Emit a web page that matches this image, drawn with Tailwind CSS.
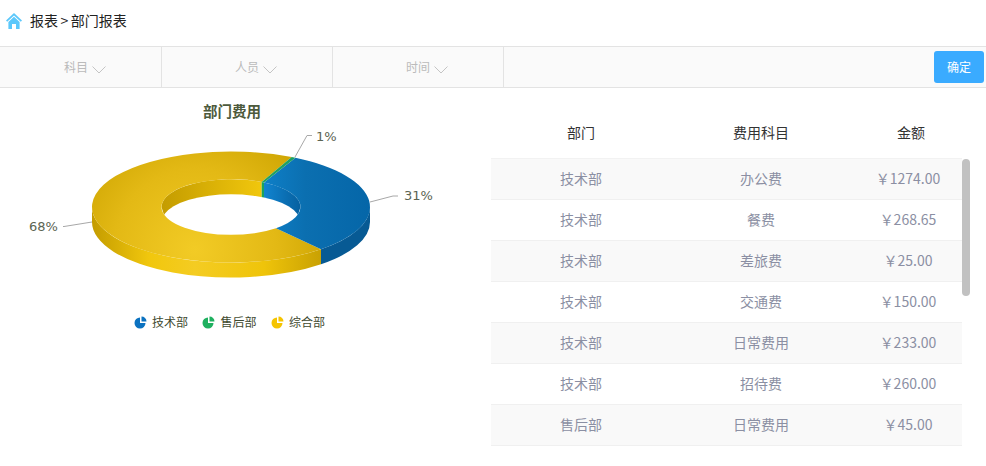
<!DOCTYPE html>
<html lang="en">
<head>
  <meta charset="UTF-8" />
  <title>部门报表</title>
  <script src="https://cdn.jsdelivr.net/npm/@tailwindcss/browser@4"></script>
</head>
<body class="h-[466px] overflow-hidden bg-white font-['Noto_Sans_CJK_SC',sans-serif] text-[#333]">
  <!-- breadcrumb -->
  <div class="flex h-[46px] items-center pb-[4px] pl-[6px] text-[14px] text-[#222]">
    <svg class="mr-[8px] h-[16px] w-[16px]" viewBox="0 0 16 16">
      <path d="M8 0 L16 7.6 L14.8 8.8 L8 2.4 L1.2 8.8 L0 7.6 Z" fill="#5cc8fb" />
      <path d="M8 3.8 L13.6 9 V16 H10 V11 H6 V16 H2.4 V9 Z" fill="#5cc8fb" />
    </svg>
    <span class="relative -top-[1px]">报表<span class="px-[2.5px]">&gt;</span>部门报表</span>
  </div>

  <!-- filter bar -->
  <div class="flex h-[42px] items-center justify-between overflow-hidden border-y border-[#e3e3e3] bg-[#fafafa] pr-[2px]">
    <div class="-ml-[9px] flex h-full text-[12px] text-[#bbb]">
      <div class="flex w-[171px] items-center justify-center border-r border-[#e3e3e3]">
        <span class="relative">科目
          <svg class="absolute top-[8px] left-full ml-[4px] h-[8px] w-[14px]" viewBox="0 0 14 8"><path d="M0.5 0.5 L7 7 L13.5 0.5" fill="none" stroke="#c4c4c4" /></svg>
        </span>
      </div>
      <div class="flex w-[171px] items-center justify-center border-r border-[#e3e3e3]">
        <span class="relative">人员
          <svg class="absolute top-[8px] left-full ml-[4px] h-[8px] w-[14px]" viewBox="0 0 14 8"><path d="M0.5 0.5 L7 7 L13.5 0.5" fill="none" stroke="#c4c4c4" /></svg>
        </span>
      </div>
      <div class="flex w-[171px] items-center justify-center border-r border-[#e3e3e3]">
        <span class="relative">时间
          <svg class="absolute top-[8px] left-full ml-[4px] h-[8px] w-[14px]" viewBox="0 0 14 8"><path d="M0.5 0.5 L7 7 L13.5 0.5" fill="none" stroke="#c4c4c4" /></svg>
        </span>
      </div>
    </div>
    <button class="h-[32px] w-[50px] rounded-[3px] bg-[#3aabff] text-[12px] text-white">确定</button>
  </div>

  <div class="flex">
    <!-- chart -->
    <div class="w-[491px] shrink-0">
      <div class="w-[464px] pt-[14px] text-center text-[14.5px] leading-[20px] font-bold text-[#4d5a3c]"><span class="relative -top-[1px]">部门费用</span></div>
      <svg class="block h-[170px] w-[491px]" viewBox="0 122 491 170">
        <defs>
          <radialGradient id="yellowTop" cx="195" cy="250" r="135" gradientUnits="userSpaceOnUse">
            <stop offset="0" stop-color="#f2cb25" />
            <stop offset="0.6" stop-color="#e3b915" />
            <stop offset="1" stop-color="#cfa603" />
          </radialGradient>
          <linearGradient id="yellowSide" x1="92" y1="0" x2="321" y2="0" gradientUnits="userSpaceOnUse">
            <stop offset="0" stop-color="#c49c00" />
            <stop offset="0.25" stop-color="#f1c70d" />
            <stop offset="0.45" stop-color="#f4cc22" />
            <stop offset="0.75" stop-color="#efc40a" />
            <stop offset="1" stop-color="#c9a103" />
          </linearGradient>
          <linearGradient id="yellowWall" x1="162" y1="0" x2="262" y2="0" gradientUnits="userSpaceOnUse">
            <stop offset="0" stop-color="#c49c00" />
            <stop offset="1" stop-color="#f1c70d" />
          </linearGradient>
          <linearGradient id="blueTop" x1="262" y1="0" x2="370" y2="0" gradientUnits="userSpaceOnUse">
            <stop offset="0" stop-color="#0e80c9" />
            <stop offset="0.4" stop-color="#0b6fb0" />
            <stop offset="1" stop-color="#0566a8" />
          </linearGradient>
          <linearGradient id="blueWall" x1="264" y1="0" x2="301" y2="0" gradientUnits="userSpaceOnUse">
            <stop offset="0" stop-color="#1184d0" />
            <stop offset="1" stop-color="#06609f" />
          </linearGradient>
        </defs>

        <!-- outer side -->
        <path d="M92 207 A139 55.5 0 0 0 321 249.3 V264.3 A139 55.5 0 0 1 92 222 Z" fill="url(#yellowSide)" />
        <path d="M321 249.3 A139 55.5 0 0 0 370 207 V222 A139 55.5 0 0 1 321 264.3 Z" fill="#075a94" />

        <!-- inner wall -->
        <path d="M161.5 207 A69.5 27.8 0 0 1 261.7 182.06 V215 H164 Z" fill="url(#yellowWall)" />
        <path d="M261.7 182.06 L264 182.53 V215 H261.7 Z" fill="#1aa35c" />
        <path d="M264 182.53 A69.5 27.8 0 0 1 300.5 207 L298 215 H264 Z" fill="url(#blueWall)" />
        <path d="M164.1 214.5 A69.5 27.8 0 0 1 297.9 214.5 A69.5 27.8 0 0 1 164.1 214.5 Z" fill="#fff" />

        <!-- top face -->
        <path d="M291.7 157.07 A139 55.5 0 1 0 321 249.3 L276 228.19 A69.5 27.8 0 1 1 261.7 182.06 Z" fill="url(#yellowTop)" />
        <path d="M295.5 157.84 A139 55.5 0 0 1 321 249.3 L276 228.19 A69.5 27.8 0 0 0 264 182.53 Z" fill="url(#blueTop)" />
        <path d="M291.7 157.07 L295.5 157.84 L264 182.53 L261.7 182.06 Z" fill="#1fa062" />

        <!-- leader lines -->
        <path d="M295 157 L307 135.5 H312" fill="none" stroke="#a8a8a8" />
        <path d="M370 202 L393 196 H398" fill="none" stroke="#a8a8a8" />
        <path d="M92 222 L64 226.5 H63" fill="none" stroke="#a8a8a8" />

        <g class="fill-[#5c6452] font-['DejaVu_Sans',sans-serif] text-[13px]">
          <text x="316" y="141">1%</text>
          <text x="404" y="200">31%</text>
          <text x="29" y="231">68%</text>
        </g>
      </svg>

      <!-- legend -->
      <div class="flex w-[459px] justify-center gap-[14.5px] pt-[21px] text-[12px] leading-[18px] text-[#3f4a30]">
        <div class="flex items-center gap-[5px]">
          <svg class="h-[13px] w-[13px]" viewBox="0 0 13 13"><path d="M6 1.5 A5.5 5.5 0 1 0 11.5 7 H6 Z M7.5 0.5 A5 5 0 0 1 12.5 5.5 H7.5 Z" fill="#0b72c0" /></svg>
          <span>技术部</span>
        </div>
        <div class="flex items-center gap-[5px]">
          <svg class="h-[13px] w-[13px]" viewBox="0 0 13 13"><path d="M6 1.5 A5.5 5.5 0 1 0 11.5 7 H6 Z M7.5 0.5 A5 5 0 0 1 12.5 5.5 H7.5 Z" fill="#1fb05f" /></svg>
          <span>售后部</span>
        </div>
        <div class="flex items-center gap-[5px]">
          <svg class="h-[13px] w-[13px]" viewBox="0 0 13 13"><path d="M6 1.5 A5.5 5.5 0 1 0 11.5 7 H6 Z M7.5 0.5 A5 5 0 0 1 12.5 5.5 H7.5 Z" fill="#f5c400" /></svg>
          <span>综合部</span>
        </div>
      </div>
    </div>

    <!-- table -->
    <div class="relative w-[495px] pt-[20px]">
      <div class="flex h-[50px] items-center pb-[1px] text-center text-[14px] text-[#333]">
        <div class="w-[180px]">部门</div>
        <div class="w-[180px]">费用科目</div>
        <div class="w-[120px]">金额</div>
      </div>
      <div id="rows" class="w-[471px] border-t border-[#f2f2f2] text-center text-[14px] text-[#8b8fa3]">
        <div class="flex h-[41px] items-center border-b border-[#f0f0f0] bg-[#f9f9f9] pb-[1px]"><div class="w-[180px]">技术部</div><div class="w-[180px]">办公费</div><div class="w-[111px] pl-[3px]">&#xFFE5;1274.00</div></div>
        <div class="flex h-[41px] items-center border-b border-[#f0f0f0] bg-white pb-[1px]"><div class="w-[180px]">技术部</div><div class="w-[180px]">餐费</div><div class="w-[111px] pl-[3px]">&#xFFE5;268.65</div></div>
        <div class="flex h-[41px] items-center border-b border-[#f0f0f0] bg-[#f9f9f9] pb-[1px]"><div class="w-[180px]">技术部</div><div class="w-[180px]">差旅费</div><div class="w-[111px] pl-[3px]">&#xFFE5;25.00</div></div>
        <div class="flex h-[41px] items-center border-b border-[#f0f0f0] bg-white pb-[1px]"><div class="w-[180px]">技术部</div><div class="w-[180px]">交通费</div><div class="w-[111px] pl-[3px]">&#xFFE5;150.00</div></div>
        <div class="flex h-[41px] items-center border-b border-[#f0f0f0] bg-[#f9f9f9] pb-[1px]"><div class="w-[180px]">技术部</div><div class="w-[180px]">日常费用</div><div class="w-[111px] pl-[3px]">&#xFFE5;233.00</div></div>
        <div class="flex h-[41px] items-center border-b border-[#f0f0f0] bg-white pb-[1px]"><div class="w-[180px]">技术部</div><div class="w-[180px]">招待费</div><div class="w-[111px] pl-[3px]">&#xFFE5;260.00</div></div>
        <div class="flex h-[41px] items-center border-b border-[#f0f0f0] bg-[#f9f9f9] pb-[1px]"><div class="w-[180px]">售后部</div><div class="w-[180px]">日常费用</div><div class="w-[111px] pl-[3px]">&#xFFE5;45.00</div></div>
      </div>
      <!-- scrollbar thumb -->
      <div class="absolute top-[71px] left-[471px] h-[137px] w-[8px] rounded-[4px] bg-[#c1c1c1]"></div>
    </div>
  </div>
</body>
</html>
